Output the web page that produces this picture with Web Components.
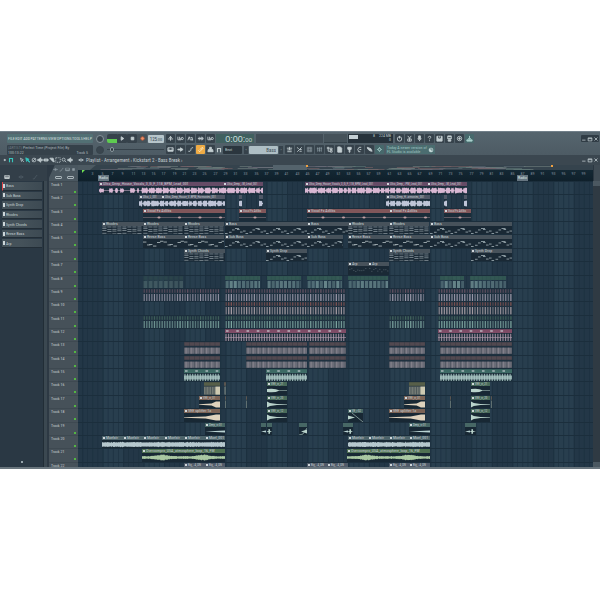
<!DOCTYPE html>
<html lang="en">
<head>
<meta charset="utf-8">
<title>Playlist</title>
<style>
    body {
        margin: 0;
        min-height: 100vh;
        display: flex;
        flex-direction: column;
        justify-content: center;
        background: #fff;
        --ui-font: "Roboto Condensed", Lato, "Liberation Sans", sans-serif;
        font-family: var(--ui-font);
        font-size: 4px;
        line-height: 5px;
        color: #b9c5c9;
    }
</style>
</head>
<body>
<daw-app></daw-app>

<script>
// one bar is 5.12 columns wide, the first bar starts in column 4
const COLS = 515;
const barColumn = bar => 4.5 + (bar - 1) * 5.12;

function random(seed) {
    let s = seed * 7919 + 17;
    return () => {
        s = (s * 1103515245 + 12345) % 2147483648;
        return s / 2147483648;
    };
}

const ICONS = {
    metronome: '<path d="M2 9h12M8 3v10M5 7l3-4 3 4"/>',
    wait: '<path d="M2 4v7h4V4M6 11h3V7"/><circle cx="12" cy="8" r="2.5"/>',
    count: '<path d="M2 12l3-8 3 8M8 6h4M9 11h5M12 6v6"/>',
    steps: '<path d="M2 8h12M5 4v8"/><circle cx="11" cy="8" r="3"/>',
    loop: '<path d="M2 4v7h4V4M6 11h3V7"/><circle cx="12" cy="8" r="2.5"/>',
    piano: '<path fill="currentColor" d="M2 4h12v8H2z"/><path stroke="#36424b" d="M5 4v5M8 4v5M11 4v5"/>',
    arrow: '<path fill="currentColor" d="M2 7h6V4l6 4-6 4V9H2z"/>',
    note: '<path d="M3 12h4c2 0 2-8 4-8h3"/>',
    link: '<path d="M3 10l3 3 3-3M7 8l5-5 2 2-5 5"/>',
    stamp: '<path fill="currentColor" d="M6 3h4v5h3l1 5H2l1-5h3z"/>',
    mixer: '<path d="M2 5h12M3 9h10M3 13h10M8 2v7"/>',
    sliders: '<path d="M3 3l3 4M3 13L13 3M8 12h5M9 8h4"/>',
    grid: '<path d="M3 3h10v10H3zM3 6h10M3 10h10M6 3v10M10 3v10" stroke="#77848b"/>',
    eq: '<path d="M4 3v10M8 3v10M12 3v10M2 6h4M6 10h4M10 5h4" stroke="#84929a"/>',
    tree: '<path d="M3 3h4v3H3zM5 6v6h5M9 5h5v3H9zM10 10h4v4h-4z"/>',
    page: '<path fill="currentColor" d="M4 2h6l3 3v9H4z"/>',
    plug: '<path fill="currentColor" d="M4 3h8v4l-3 3v4H7v-4L4 7z"/>',
    hook: '<path d="M12 3H7L4 8l2 5h4M8 8h4"/>',
    hand: '<path fill="currentColor" d="M3 3l8 3 3 6-5-1-5-4z"/>',
    tempo: '<circle cx="8" cy="8" r="3"/><path d="M8 3v2M8 11v2M3 8h2M11 8h2"/>',
    power: '<circle cx="8" cy="9" r="5"/><path d="M8 2v6"/>',
    plugx: '<path d="M4 2l4 5 4-5M8 7v7M4 9h8v5H4z"/>',
    mic: '<path fill="currentColor" d="M6 2h4v7H6z"/><path d="M4 8c0 4 8 4 8 0M8 11v3"/>',
    help: '<path d="M5 6c0-4 6-4 6-1 0 2-3 2-3 5M8 12v2"/>',
    save: '<path fill="currentColor" d="M2 3h12v11H2z"/><path stroke="#36424b" d="M6 3v4h4V3"/>',
    render: '<path fill="currentColor" d="M4 2h8v7H4zM5 11h6v3H5z"/><path stroke="#36424b" d="M5 6h6"/>',
    chat: '<circle cx="8" cy="8" r="5"/><path d="M5 8h6M8 5v6"/>',
    download: '<path d="M8 2v7M5 7l3 3 3-3"/><path fill="currentColor" d="M2 11h12v3H2z"/>',
    globe: '<circle cx="8" cy="8" r="5" fill="currentColor"/><path stroke="#4b6d70" d="M8 3v5h5"/>',
    magnet: '<path stroke-width="3" d="M4 14V4h8v10"/>',
    pencil: '<path d="M3 3l8 4-2 2 4 4M4 4l3 8 2-3" />',
    brush: '<path fill="currentColor" d="M2 2l9 4-3 2 5 5-2 1-5-5-2 3z"/>',
    erase: '<circle cx="8" cy="8" r="5"/><path d="M4 12l8-8"/>',
    mute: '<path fill="currentColor" d="M2 6h3l5-4v12l-5-4H2zM12 6h2v4h-2z"/>',
    slip: '<path fill="currentColor" d="M1 8l5-4v8zM15 8l-5-4v8z"/><path d="M4 8h8"/>',
    slice: '<path fill="currentColor" d="M2 3h9l3 10-4-1z"/>',
    select: '<path stroke-dasharray="3 2" d="M2 2h12v12H2z"/>',
    zoom: '<circle cx="7" cy="7" r="4"/><path d="M10 10l4 4"/>',
    min: '<path d="M3 11h9"/>',
    max: '<path d="M3 5h10v8H3zM3 7h10"/>',
    close: '<path d="M4 4l8 8M12 4l-8 8"/>',
    curve: '<path d="M2 13h4L12 4h2"/>',
    play: '<path fill="currentColor" d="M5 4l6 4-6 4z"/>',
    caret: '<path fill="currentColor" d="M6 6l4 2-4 2z"/>',
    stop: '<path fill="currentColor" d="M5 5h6v6H5z"/>',
    record: '<circle cx="8" cy="8" r="4" fill="#f0936a" stroke="#b3583c"/>',
    cross: '<path d="M2 8h12M8 3v10M5 6l-3 2 3 2M11 6l3 2-3 2"/>'
};

class DawIcon extends HTMLElement {
    connectedCallback() {
        const root = this.attachShadow({ mode: 'open' });
        root.innerHTML = `
            <style>
                :host { display: block; width: 8px; height: 8px; flex: none; }
                svg { display: block; width: 100%; height: 100%; }
            </style>
            <svg viewBox="0 0 16 16" fill="none" stroke="currentColor" stroke-width="2">${ICONS[this.getAttribute('name')] || ''}</svg>
        `;
    }
}
customElements.define('daw-icon', DawIcon);

class ToolButton extends HTMLElement {
    connectedCallback() {
        const root = this.attachShadow({ mode: 'open' });
        const name = this.getAttribute('icon');
        root.innerHTML = `
            <style>
                :host { display: block; width: 9px; height: 9px; flex: none; color: #c3ced1; }
                :host([active]) { --face: #efab45; color: #fff1d0; }
                :host([teal]) { --face: #47696c; color: #a9d0cd; }
                :host([flat]) { --face: transparent; width: 6px; }
                :host([flat][on]) { color: #37c6bd; }
                button {
                    display: flex;
                    align-items: center;
                    justify-content: center;
                    width: 100%;
                    height: 100%;
                    padding: 0;
                    border: 0;
                    border-radius: 1px;
                    color: inherit;
                    background: var(--face, #36424b);
                }
                daw-icon { width: 7px; height: 7px; }
                :host([flat]) daw-icon { width: 6px; height: 6px; }
            </style>
            <button aria-label="${name}"><daw-icon name="${name}"></daw-icon></button>
        `;
    }
}
customElements.define('tool-button', ToolButton);

const buttons = (names, attrs = '') => names.map(n => `<tool-button icon="${n}" ${attrs}></tool-button>`).join('');

//
// main toolbar: menu, transport, panels
//
class MainToolbar extends HTMLElement {
    constructor() {
        super();
        const menu = ['FILE', 'EDIT', 'ADD', 'PATTERNS', 'VIEW', 'OPTIONS', 'TOOLS', 'HELP'];
        this.attachShadow({ mode: 'open' });
        this.shadowRoot.innerHTML = `
            <style>
                :host {
                    display: flex;
                    gap: 1px;
                    padding: 2px 1px 0 7px;
                    height: 24px;
                    background: linear-gradient(#56656e, #4d5b64);
                    border-top: 1px solid #72808a;
                    box-sizing: border-box;
                    flex: none;
                }
                .left {
                    display: grid;
                    grid-template-columns: 86px 12px 57px 50px;
                    grid-template-rows: 9px 9px;
                    gap: 2px 1px;
                    align-items: center;
                }
                .right { flex: 1; display: grid; grid-template-rows: 9px 9px; gap: 2px; }
                .row { display: flex; gap: 1px; align-items: center; height: 9px; }
                nav, .hint { height: 9px; display: flex; border-radius: 1px; }
                nav { justify-content: space-between; padding: 0 1px; background: #527074; }
                nav button { font: 4px/9px var(--ui-font); padding: 0; border: 0; background: none; color: #d2dfdf; }
                .hint { display: block; height: 10px; background: #35414a; color: #aab5b9; padding: 0 1px; }
                .hint p { margin: 0; display: flex; justify-content: space-between; padding-right: 4px; white-space: nowrap; }
                .hint i { font-style: normal; color: #6c7a81; }
                .knob { width: 6px; height: 6px; border-radius: 50%; background: #3a464f; border: 1px solid #87949b; margin: auto; }
                .knob.dim { border-color: #38444c; }
                .transport { display: flex; align-items: center; height: 9px; }
                .mode { width: 10px; height: 9px; padding: 0; border: 0; background: linear-gradient(#36424b 50%, #5ecb50 50%); border-radius: 2px 0 0 2px; flex: none; }
                .transport tool-button { width: 10px; }
                .transport tool-button[icon="record"] { --face: #45525a; }
                .tempo { flex: 1; min-width: 0; height: 8px; margin-left: 1px; border-radius: 1px; background: #b7c5ca; color: #35454f; font-size: 5px; line-height: 8px; text-align: center; }
                .tempo small { font-size: 3px; }
                input { -webkit-appearance: none; appearance: none; width: 100%; height: 5px; margin: 0; background: linear-gradient(#0000 2px, #36424b 2px 3px, #0000 3px); }
                input::-webkit-slider-thumb { -webkit-appearance: none; width: 4px; height: 5px; border-radius: 2px; background: #2b363e; border: 1px solid #8d9aa0; box-sizing: border-box; }
                .time { width: 38px; height: 9px; background: #40605f; color: #c8dedb; font: 9px/10px "Liberation Sans", sans-serif; text-align: right; padding-right: 2px; box-sizing: border-box; }
                .time small { font-size: 6px; }
                .scope { width: 67px; height: 9px; background: #414d56; }
                .pan { width: 23px; height: 9px; background: #45525a; border-bottom: 1px solid #35424a; box-sizing: border-box; }
                .cpu { width: 45px; height: 9px; background: #26323b; display: grid; grid-template-columns: 9px 1fr 16px; padding: 0 2px 0 1px; box-sizing: border-box; line-height: 4px; text-align: right; }
                .cpu b { background: #c4d0d5; height: 4px; margin-top: 1px; }
                .icons { display: flex; gap: 1px; }
                .shift { margin-left: 1px; }
                .window { margin-left: auto; display: flex; background: #303c45; border-radius: 1px; height: 7px; align-items: center; }
                select { -webkit-appearance: none; appearance: none; border: 0; margin: 0; border-radius: 1px; height: 8px; padding: 0 2px; font: 4px/8px var(--ui-font); background: #2b363e; color: #b9c5c9; }
                .snap { width: 19px; }
                .pattern { width: 29px; background: #aebec4; color: #3c4a53; font-size: 5px; text-align: right; text-align-last: right; }
                .step { width: 4px; height: 8px; padding: 0; border: 0; background: #36424b; color: #b9c5c9; font: 4px/8px var(--ui-font); }
                .news { display: flex; gap: 1px; align-items: center; background: #4b6d70; color: #9fc4c3; padding: 0 1px; height: 9px; width: 49px; line-height: 4px; white-space: nowrap; justify-content: space-between; box-sizing: border-box; }
                .news daw-icon { width: 6px; height: 6px; color: #c9dcdc; }
            </style>
            <div class="left">
                <nav>${menu.map(m => `<button>${m}</button>`).join('')}</nav>
                <span class="knob"></span>
                <div class="transport">
                    <button class="mode" aria-label="pattern or song"></button>
                    ${buttons(['play', 'stop', 'record'])}
                    <span class="tempo">125<small>.000</small></span>
                </div>
                <div class="icons shift">${buttons(['metronome', 'wait', 'count', 'steps', 'loop'])}</div>
                <div class="hint">
                    <p><span><i>(ARTIST)</i> Perfect Time (Project File) By</span></p>
                    <p><span>100:13:22</span><span>Track 5</span></p>
                </div>
                <span class="knob dim"></span>
                <input type="range" aria-label="song position" value="5">
                <div class="icons shift">${buttons(['piano', 'arrow', 'note'])}<tool-button icon="link" active></tool-button>${buttons(['stamp'])}</div>
            </div>
            <div class="right">
                <div class="row">
                    <div class="time">0:00:<small>00</small></div>
                    <div class="scope shift"></div>
                    <div class="pan"></div>
                    <div class="cpu"><b></b><span>8</span><span>224 MB<br>0</span></div>
                    <div class="icons shift">${buttons(['power', 'plugx', 'mic', 'help', 'save', 'render', 'chat'])}<tool-button icon="download" teal></tool-button></div>
                    <div class="window">${buttons(['min', 'max', 'close'], 'flat')}</div>
                </div>
                <div class="row">
                    <tool-button icon="magnet" flat></tool-button>
                    <select class="snap" aria-label="snap"><option>Beat</option></select>
                    <button class="step shift">‹</button>
                    <select class="pattern" aria-label="pattern"><option>Bass</option></select>
                    <button class="step">›</button>
                    <div class="icons shift">${buttons(['mixer', 'sliders', 'grid', 'eq', 'tree', 'page', 'plug', 'hook', 'hand'])}<tool-button icon="tempo" teal></tool-button></div>
                    <div class="news shift"><span>Today A newer version of<br>FL Studio is available</span><daw-icon name="globe"></daw-icon></div>
                </div>
            </div>
        `;
    }
}
customElements.define('main-toolbar', MainToolbar);

//
// title strip of the playlist window
//
class PlaylistBar extends HTMLElement {
    constructor() {
        super();
        this.attachShadow({ mode: 'open' });
        this.shadowRoot.innerHTML = `
            <style>
                :host { display: flex; align-items: center; gap: 5px; height: 10px; padding: 0 1px 0 2px; background: #3b4750; flex: none; }
                .tools { display: flex; align-items: center; }
                h1 { margin: 0; font: 5px/10px var(--ui-font); color: #c3cdd0; white-space: nowrap; }
                .title { display: flex; align-items: center; gap: 2px; }
                .window { margin-left: auto; display: flex; }
            </style>
            <div class="tools">
                <tool-button icon="caret" flat></tool-button><tool-button icon="magnet" flat on></tool-button>
            </div>
            <div class="tools">
                <tool-button icon="pencil" flat></tool-button><tool-button icon="brush" flat on></tool-button>
                ${buttons(['erase', 'mute', 'slip', 'slice', 'select', 'zoom', 'mute'], 'flat')}
            </div>
            <div class="title">
                <tool-button icon="cross" flat></tool-button>
                <h1>Playlist - Arrangement › Kickstart 2 - Bass Break ›</h1>
            </div>
            <div class="window">${buttons(['min', 'max', 'close'], 'flat')}</div>
        `;
    }
}
customElements.define('playlist-bar', PlaylistBar);

//
// picker on the left with the patterns
//
class PatternPicker extends HTMLElement {
    constructor() {
        super();
        const names = ['Bass', 'Sub Bass', 'Synth Drop', 'Rhodes', 'Synth Chords', 'Reese Bass', 'Arp'];
        this.attachShadow({ mode: 'open' });
        this.shadowRoot.innerHTML = `
            <style>
                :host { display: grid; grid-template: 16px 1fr / 43px 4px; width: 47px; background: #2a3844; flex: none; }
                header { grid-column: 1 / 3; display: flex; gap: 8px; align-items: end; padding: 0 4px 1px; background: #333f49; color: #d0d8da; }
                header daw-icon { width: 6px; height: 6px; }
                header daw-icon + daw-icon { color: #4f5c65; }
                .list { display: grid; grid-template-rows: repeat(7, 1fr); gap: 1px; height: 66px; padding: 1px 1px 0 2px; }
                button {
                    display: flex; align-items: center; gap: 1px; padding: 0 0 0 1px; border: 0; border-bottom: 1px solid #222d36;
                    background: linear-gradient(90deg, #45525a 45%, #3d4a53); color: #c3cdd1; font: 4px/7px var(--ui-font);
                }
                button::before { content: ""; width: 2px; height: 4px; background: #cdd6d9; }
                button:first-child { border-left: 1px solid #e4474a; padding-left: 0; }
                .bar { background: #3b4851; border-left: 1px solid #212d36; }
                .side { display: flex; flex-direction: column; justify-content: space-between; }
                .dot { align-self: center; width: 2px; height: 2px; background: #97a5ac; margin-bottom: 4px; }
            </style>
            <header><daw-icon name="piano"></daw-icon><daw-icon name="cross"></daw-icon><daw-icon name="curve"></daw-icon></header>
            <div class="side">
                <div class="list">${names.map(n => `<button>${n}</button>`).join('')}</div>
                <span class="dot"></span>
            </div>
            <div class="bar"></div>
        `;
    }
}
customElements.define('pattern-picker', PatternPicker);

//
// ruler with the bar numbers, the overview strip is above it
//
class TimelineRuler extends HTMLElement {
    constructor() {
        super();
        let numbers = '';
        for (let bar = 3; bar < 100; bar += 2) {
            const c = Math.round(barColumn(bar));
            numbers += `<span style="grid-column: ${c - 4} / ${c + 5}">${bar}</span>`;
        }
        const rnd = random(5);
        const tints = ['#6d6a78', '#7a6265', '#5f7a78', '#71807f', '#5b6a74'];
        let overview = '';
        for (let i = 0; i < 90; i++) {
            const x = 20 + rnd() * 430;
            overview += `<rect x="${x}" y="${1 + Math.floor(rnd() * 4)}" width="${8 + rnd() * 22}" height="1" fill="${tints[i % 5]}" opacity=".6"/>`;
        }
        this.attachShadow({ mode: 'open' });
        this.shadowRoot.innerHTML = `
            <style>
                :host { display: grid; grid-template-rows: 5px 11px; min-width: 0; }
                .overview { background: #35434d; display: block; width: 100%; height: 5px; }
                .numbers { display: grid; grid-template: 5px 6px / repeat(${COLS}, minmax(0, 1fr)); background: linear-gradient(#142834, #0f202b); color: #84939b; text-align: center; }
                .numbers span { grid-row: 1; white-space: nowrap; line-height: 7px; }
                .numbers b { grid-row: 2; font-weight: normal; text-align: center; background: #667580; color: #dfe6e8; line-height: 6px; white-space: nowrap; }
                .numbers i { grid-row: 1; background: #6fe052; clip-path: polygon(0 0, 100% 0, 0 100%); height: 3px; }
            </style>
            <svg class="overview" viewBox="0 0 515 5" preserveAspectRatio="none">
                <path d="M0 0h18l-6 5H0z" fill="#4d5a62"/>${overview}
                <rect x="195" width="34" height="5" fill="#54636c"/>
                <rect x="228" width="2" height="2" fill="#f0a040"/><rect x="473" width="2" height="2" fill="#f0a040"/>
            </svg>
            <div class="numbers">
                <i style="grid-column: 5 / 8"></i>${numbers}
                <b style="grid-column: 21 / 32">Radio</b><b style="grid-column: 440 / 451">Radio</b>
            </div>
        `;
    }
}
customElements.define('timeline-ruler', TimelineRuler);

//
// a clip: title strip and a drawing of its content
//
const wavePath = (w, rnd, level) => {
    let top = '', bottom = '';
    for (let x = 0; x <= w; x += .5) {
        const h = level(x / w, x) * (.65 + .35 * rnd());
        top += `L${x} ${(4.5 - h).toFixed(2)}`;
        bottom = `L${x} ${(4.5 + h).toFixed(2)}` + bottom;
    }
    return `<path d="M0 4.5${top}${bottom}Z" fill="currentColor"/>`;
};

const DRAW = {
    // words with short breaths between them
    vocal(w, rnd) {
        let gate = 1, next = 3;
        return wavePath(w, rnd, (t, x) => {
            if (x > next) {
                gate = gate ? 0 : 1;
                next = x + (gate ? 2 + rnd() * 6 : .5);
            }
            return gate ? 3.1 : .5;
        });
    },
    // sparse words first, full phrase from 42 on
    intro(w, rnd) {
        const words = [[0, 5], [10, 14], [16, 19], [21, 25], [31, 36], [38, 40]];
        return wavePath(w, rnd, (t, x) => x > 42 ? (x % 7 < .9 ? .6 : 3.1) : words.some(p => x > p[0] && x < p[1]) ? 2.6 : .3);
    },
    loop: (w, rnd) => wavePath(w, rnd, () => 2.7),
    air: (w, rnd) => wavePath(w, rnd, (t, x) => 1.5 + Math.pow(Math.sin(x / 13), 6) * 1.6),
    fx(w) {
        let s = `<path d="M0 4.5H${w}" stroke="currentColor" stroke-width=".4"/>`;
        for (let x = 16; x < w; x += 20.5) {
            s += `<ellipse cx="${x}" cy="4.5" rx="1.6" ry=".9" fill="currentColor"/>`;
        }
        return s;
    },
    up: w => `<path d="M0 4.2L${w * .6} 3.6 ${w - 4} 1.6 ${w} 1.6V7.4H${w - 4}L${w * .6} 5.4 0 4.8Z" fill="currentColor"/>`,
    down: w => `<path d="M0 1.4L${w * .15} 3 ${w * .5} 4 ${w} 4.3V4.7L${w * .5} 5 ${w * .15} 6 0 7.6Z" fill="currentColor"/>`,
    swell: w => `<path d="M0 3Q${w * .4} 2 ${w * .6} 4.2L${w} 4.3V4.7L${w * .6} 4.8Q${w * .4} 7 0 6Z" fill="currentColor"/>`,
    thin: w => `<path d="M0 4.5L${w} 3.5V5.5Z" fill="currentColor"/>`,
    hit: w => `<path d="M0 4.3L1.4 4 1.6 2h1L3.2 4 ${w} 4.4 3.2 5 2.6 7h-1L1.4 5 0 4.7Z" fill="currentColor"/>`,
    curve: w => `<path d="M0 8L${w / 2} 7 ${w} 1" fill="none" stroke="currentColor" stroke-width=".6"/><path d="M2 4.5L${w} 2.6V6.4Z" fill="currentColor"/>`,
    decay: w => `<path d="M0 2.6L7 4.5 0 6.4" fill="currentColor"/><path d="M4 0L${w} 9" stroke="currentColor" stroke-width=".6"/>`,
    chords(w) {
        let s = '';
        for (let x = 0; x < w - 1; x += 5) {
            const o = (x * 3 % 4) / 3;
            for (const y of [.5, 2.2, 4, 6.8]) {
                s += `<rect x="${x + .3}" y="${y + (y > 1 ? o : 0)}" width="4.2" height=".9" fill="currentColor" opacity=".8"/>`;
            }
        }
        return s;
    },
    bass(w) {
        const line = [[0, 7], [4, 5.8], [7, 3.5], [10, 2], [12, 3], [15, 5.6], [18, 4.6]];
        let s = '';
        for (let x = 0; x < w; x += 20.5) {
            for (const [a, y] of line) {
                s += `<rect x="${x + a}" y="${y}" width="${a === 10 ? 4 : 2.6}" height=".9" fill="currentColor"/>`;
            }
        }
        return s;
    },
    reese(w) {
        let s = '';
        for (let x = 0; x < w; x += 20.5) {
            for (const [a, y] of [[0, 2.6], [4, 5.5], [6, 5], [10, 6.6], [14, 3], [17, 1.8]]) {
                s += `<rect x="${x + a}" y="${y}" width="3.4" height=".9" fill="currentColor"/>`;
            }
        }
        return s;
    },
    arp(w, rnd) {
        let s = '';
        for (let x = 1; x < w - 1; x += 2) {
            s += `<rect x="${x}" y="${2 + rnd() * 4}" width="1.5" height=".7" fill="currentColor" opacity=".4"/>`;
        }
        return s;
    },
    // one shots, drawn over the whole height of the lane
    hits(w, rnd, o) {
        let s = '';
        for (let x = .6; x < w - .5; x += o.step) {
            const k = .5 + rnd() * .5;
            s += `<rect x="${x}" y="-3.8" width="${o.width}" height="3.6" fill="${o.head}" opacity="${k}"/>
                  <rect x="${x}" y="1" width="${o.width}" height="7.4" fill="currentColor" opacity="${k}"/>`;
        }
        return s;
    },
    blocks(w, rnd, o) {
        let s = `<rect x="0" y="-3.8" width="${w}" height="3.6" fill="${o.head}"/><rect x="0" y="1.6" width="${w}" height="6.2" fill="currentColor" opacity=".55"/>`;
        for (let x = 0; x < w; x += 5.12) {
            s += `<rect x="${x}" y="-3.8" width=".6" height="12" fill="#26333d" opacity=".5"/><rect x="${x + 1.5}" y="1.6" width="1.2" height="6.2" fill="currentColor" opacity=".4"/>`;
        }
        return s;
    },
    beat(w, rnd, o) {
        let s = `<rect x="0" y="-3.8" width="${w}" height="3.8" fill="${o.head}"/>`;
        for (let x = 1; x < w - 2; x += 10.24) {
            s += `<rect x="${x}" y="-2.9" width="2.6" height="1.8" fill="#c8cfd4" opacity=".65"/>`;
        }
        for (let x = .4; x < w - .5; x += 2.56) {
            s += `<rect x="${x}" y=".8" width="1.2" height="7.4" fill="currentColor" opacity=".8"/>`;
        }
        return s + `<path d="M0 4.5H${w}" stroke="currentColor" stroke-width="${o.line || .8}" opacity=".8"/>`;
    },
    grain(w, rnd, o) {
        return `<rect x="0" y="-3.8" width="${w}" height="3.6" fill="${o.head}"/>
            <rect x="0" y=".6" width="${w}" height="8" fill="currentColor" opacity=".45"/>
            <rect x="${w * .72}" y=".6" width="${w * .28}" height="8" fill="currentColor" opacity=".9"/>
            <path d="M2 .6v8M5 .6v8M7.5 .6v8M10 .6v8" stroke="#3d4a50" stroke-width=".7"/>`;
    }
};

class PlaylistClip extends HTMLElement {
    connectedCallback() {
        const { from, to, label, kind, head, ink, shade, opts } = this.clip;
        const w = to - from;
        // long names on short clips are set smaller
        const size = label.length * 2 + 4 > w ? 3 : 4;
        const root = this.attachShadow({ mode: 'open' });
        this.style.gridColumn = `${from - 77} / ${to - 77}`;
        root.innerHTML = `
            <style>
                :host { grid-row: 1; display: grid; grid-template-rows: 4px 1fr; min-width: 0; min-height: 0; overflow: hidden; color: ${ink}; background: ${shade}; }
                .title { display: flex; align-items: center; gap: 1px; background: ${head || 'transparent'}; color: #c6ced3; font-size: ${size}px; line-height: 4px; padding-left: 1px; white-space: nowrap; }
                .title:not(:empty)::before { content: ""; width: 2px; height: 2px; background: #d0d7da; flex: none; }
                svg { display: block; width: 100%; height: 100%; overflow: visible; min-height: 0; }
            </style>
            <div class="title">${label && `<span>${label}</span>`}</div>
            <svg viewBox="0 0 ${w} 9" preserveAspectRatio="none">${DRAW[kind](w, random(from), { head: opts.tint, ...opts })}</svg>
        `;
    }
}
customElements.define('playlist-clip', PlaylistClip);

class PlaylistTrack extends HTMLElement {
    connectedCallback() {
        const root = this.attachShadow({ mode: 'open' });
        root.innerHTML = `
            <style>
                :host { display: grid; grid-template-columns: 29px 1fr; min-height: 0; box-sizing: border-box; }
                .head { background: #465159; border-top: 1px solid #3e4951; color: #c4ccd0; font-size: 4px; line-height: 5px; padding-left: 2px; display: flex; justify-content: space-between; white-space: nowrap; }
                .led { align-self: end; width: 2px; height: 2px; padding: 0; border: 0; border-radius: 1px; background: #58d83c; margin: 0 2px 2px 0; }
                .lane { display: grid; grid-template: minmax(0, 1fr) / repeat(${COLS}, minmax(0, 1fr)); min-width: 0; border-top: 1px solid #1b2e3c; }
            </style>
            <div class="head"><span>${this.getAttribute('name')}</span><button class="led" aria-label="mute"></button></div>
            <div class="lane"></div>
        `;
        const lane = root.querySelector('.lane');
        this.clips.forEach(clip => {
            const el = document.createElement('playlist-clip');
            el.clip = clip;
            lane.appendChild(el);
        });
    }
}
customElements.define('playlist-track', PlaylistTrack);

// clip styles: [drawing, title colour, ink, background, options]
const STYLES = {
    intro: ['intro', '#654b66', '#d9b8d3', '#1d2f3d'],
    lead: ['vocal', '#654b66', '#d9b8d3', '#1d2f3d'],
    harmony: ['vocal', '#4f5766', '#bfc5d8', '#1d2f3d'],
    adlib: ['fx', '#80565a', '#c0a0a4', '#1b2c39'],
    rhodes: ['chords', '#47525b', '#929fa6', '#1a2935'],
    bass: ['bass', '#47525b', '#94a2a9', '#1a2935'],
    reese: ['reese', '#47525b', '#a3afb4', '#1a2935'],
    arp: ['arp', '#47525b', '#94a2a9', '#1a2935'],
    shakerDim: ['hits', null, '#4a636a', '#2c454b55', { tint: '#2d474c', step: 5.12, width: 3.6 }],
    shaker: ['hits', null, '#66858a', 'linear-gradient(#2f5250 4px, #0000 4px)', { tint: '#355a55', step: 4.1, width: 3 }],
    hatA: ['hits', null, '#a7a3b4', '#1f3140', { tint: '#6e5767', step: 2.56, width: 1.2 }],
    hatB: ['hits', null, '#b3a7ad', '#1f3140', { tint: '#8b5753', step: 2.56, width: 1.2 }],
    hatC: ['hits', null, '#7fa9a3', '#1f3140', { tint: '#45695f', step: 2.56, width: 1.3 }],
    kick: ['beat', null, '#b09aac', '#1d2d3a', { tint: '#7e4c66' }],
    snare: ['blocks', null, '#a89da4', '#1f3140', { tint: '#524950' }],
    clap: ['beat', null, '#abc8c5', '#1c303b', { tint: '#3d6a65', line: 4 }],
    grain: ['grain', null, '#d8d2b8', '#22323c', { tint: '#575f49' }],
    sliver: ['grain', null, '#8c9a96', '#22323c', { tint: '#5a5550' }],
    swell: ['swell', '#496b5b', '#b9d3cb', '#182834'],
    fall: ['down', '#496b5b', '#b9d3cb', '#182834'],
    rise: ['up', '#7b6356', '#ded2bd', '#182834'],
    thin: ['thin', '#476765', '#b9d3d3', '#182834'],
    hit: ['hit', '#476765', '#b9d3cb', '#182834'],
    curve: ['curve', '#476765', '#b9d3cb', '#182834'],
    decay: ['decay', '#476765', '#b9d3cb', '#182834'],
    pad: ['loop', '#4c636a', '#b6c8ce', '#182834'],
    air: ['air', '#4f7152', '#a9c7a2', '#182834'],
    big: ['loop', '#505b69', '#b6c8ce', '#182834']
};

const LEAD = 'Ultra_Deep_House_Vocals_3_G_F_118_BPM_Lead_001';
const LEAD_SHORT = 'Ultra_Deep_..M_Lead_001';
const LOOP = 'Overcompro_USA_atmosphere_loop_16_FM';
const TRACKS = [
    [['intro', 99, 223, LEAD], ['lead', 223, 263, LEAD_SHORT], ['lead', 305, 386, LEAD], ['lead', 386, 427, 'Ultra_Deep_..PM_Lead_001'], ['lead', 427, 467, LEAD_SHORT]],
    [['harmony', 139, 161, 'Ultra_L_001'], ['harmony', 161, 225, 'Ultra_Deep_House_V..BPM_Harmonies_001'], ['harmony', 239, 242], ['harmony', 259, 263],
        ['harmony', 386, 430, 'Ultra_Deep_H..armonies_001'], ['harmony', 444, 447], ['harmony', 464, 467]],
    [['adlib', 143, 225, 'Vocal Fx Adlibs'], ['adlib', 239, 266, 'Vocal Fx Adlibs'], ['adlib', 307, 389, 'Vocal Fx Adlibs'], ['adlib', 389, 430, 'Vocal Fx Adlibs'], ['adlib', 444, 471, 'Vocal Fx Adlibs']],
    [['rhodes', 102, 143, 'Rhodes'], ['rhodes', 143, 184, 'Rhodes'], ['rhodes', 184, 224, 'Rhodes'], ['bass', 225, 307, 'Bass'], ['bass', 307, 348, 'Bass'],
        ['rhodes', 348, 389, 'Rhodes'], ['rhodes', 389, 429, 'Rhodes'], ['bass', 430, 512, 'Bass']],
    [['reese', 143, 184, 'Reese Bass'], ['reese', 184, 224, 'Reese Bass'], ['bass', 225, 307, 'Sub Bass'], ['bass', 307, 343, 'Sub Bass'],
        ['reese', 348, 389, 'Reese Bass'], ['reese', 389, 430, 'Reese Bass'], ['bass', 430, 512, 'Sub Bass']],
    [['rhodes', 184, 225, 'Synth Chords'], ['bass', 266, 307, 'Synth Drop'], ['rhodes', 389, 430, 'Synth Chords'], ['bass', 471, 512, 'Synth Drop']],
    [['arp', 348, 368, 'Arp'], ['arp', 368, 389, 'Arp']],
    [['shakerDim', 143, 183], ['shaker', 225, 260], ['shaker', 267, 301], ['shaker', 307, 342], ['shaker', 348, 388], ['shaker', 440, 464], ['shaker', 470, 506]],
    [['hatA', 143, 220], ['hatA', 225, 346], ['hatA', 389, 425], ['hatA', 438, 512]],
    [['hatB', 225, 346], ['hatB', 438, 512]],
    [['hatC', 143, 220], ['hatC', 225, 346], ['hatC', 389, 425], ['hatC', 438, 512]],
    [['kick', 225, 346], ['kick', 438, 512]],
    [['snare', 184, 220], ['snare', 246, 307], ['snare', 309, 346], ['snare', 389, 425], ['snare', 440, 512]],
    [['snare', 184, 220], ['snare', 246, 307], ['snare', 309, 346], ['snare', 389, 425], ['snare', 440, 512]],
    [['clap', 184, 220], ['clap', 266, 307], ['clap', 440, 512]],
    [['grain', 204, 220], ['sliver', 224, 226], ['swell', 267, 287, 'VEE_vr_21'], ['grain', 409, 425], ['swell', 471, 490, 'VEE_vr_21']],
    [['rise', 199, 220, 'VEE_vr_01'], ['sliver', 225, 226], ['sliver', 246, 247], ['fall', 267, 287, 'VEE_vr_20'], ['rise', 404, 425, 'VEE_vr_01'],
        ['sliver', 450, 451], ['fall', 471, 490, 'VEE_vr_20'], ['sliver', 491, 492]],
    [['rise', 184, 220, 'VEE uplifter 1a'], ['fall', 267, 287, 'VEE_vr_12'], ['decay', 348, 363, 'VE_r 02'], ['rise', 389, 425, 'VEE uplifter 1a'], ['fall', 471, 490, 'VEE_vr_12']],
    [['thin', 205, 225, 'Deep_vr 01'], ['thin', 261, 266], ['hit', 267, 272], ['curve', 299, 307], ['thin', 343, 348], ['hit', 348, 353],
        ['thin', 409, 430, 'Deep_vr 01'], ['thin', 465, 470], ['hit', 470, 476]],
    [['pad', 102, 123, 'Maelstr'], ['pad', 123, 143, 'Maelstr'], ['pad', 143, 164, 'Maelstr'], ['pad', 164, 184, 'Maelstr'], ['pad', 184, 205, 'Maelstr'], ['pad', 205, 225, 'Mael_001'],
        ['pad', 348, 368, 'Maelstr'], ['pad', 368, 389, 'Maelstr'], ['pad', 389, 409, 'Maelstr'], ['pad', 409, 430, 'Mael_001']],
    [['air', 142, 225, LOOP], ['air', 347, 430, LOOP]],
    [['big', 184, 205, 'Big_..4_DN'], ['big', 205, 225, 'Big_..4_DN'], ['big', 307, 327, 'Big_..4_DN'], ['big', 327, 348, 'Big_..4_DN'], ['big', 389, 409, 'Big_..4_DN'], ['big', 409, 430, 'Big_..4_DN']]
];

//
// the playlist: ruler on top, tracks below
//
class PlaylistView extends HTMLElement {
    constructor() {
        super();
        let grid = '';
        for (let bar = 1; bar < 101; bar++) {
            const x = barColumn(bar);
            if ((bar - 1) % 8 >= 4) {
                grid += `<rect x="${x}" width="5.2" height="1" fill="#283e4e"/>`;
            }
            grid += `<rect x="${x - .3}" width="${(bar - 1) % 4 ? .6 : 1}" height="1" fill="#1a2e3c" opacity=".75"/>`;
        }
        this.attachShadow({ mode: 'open' });
        this.shadowRoot.innerHTML = `
            <style>
                :host { display: grid; grid-template: 16px 1fr / 29px minmax(0, 1fr) 7px; flex: 1; min-width: 0; padding-left: 2px; background: #2d3944; }
                .corner { background: #4a5760; color: #8f9ca3; display: flex; flex-wrap: wrap; align-items: center; justify-content: space-around; clip-path: polygon(20% 0, 100% 0, 100% 100%, 0 100%, 0 80%); padding: 0 2px 0 4px; }
                .corner daw-icon { width: 5px; height: 5px; }
                .corner i { width: 5px; height: 1px; border: 1px solid #aab5ba; border-radius: 1px; }
                .tracks { grid-column: 1 / 3; position: relative; overflow: hidden; height: 286px; background: linear-gradient(90deg, #465159 29px, #233747 29px); }
                .grid { position: absolute; left: 29px; top: 0; width: calc(100% - 29px); height: 100%; }
                .rows { position: relative; display: grid; grid-template-rows: repeat(22, minmax(0, 1fr)); height: 294px; }
                .cap { background: #3f4b54; border-left: 1px solid #2b3741; }
                .scroll { background: #2f3a43; display: flex; flex-direction: column; justify-content: space-between; }
                .scroll b { height: 5px; background: #4b5861; }
            </style>
            <div class="corner"><daw-icon name="cross"></daw-icon><daw-icon name="curve"></daw-icon><daw-icon name="piano"></daw-icon><daw-icon name="stop"></daw-icon><i></i><i></i></div>
            <timeline-ruler></timeline-ruler>
            <div class="cap"></div>
            <div class="tracks">
                <svg class="grid" viewBox="0 0 515 1" preserveAspectRatio="none">${grid}</svg>
                <div class="rows"></div>
            </div>
            <div class="scroll"><b></b><b></b></div>
        `;
        const rows = this.shadowRoot.querySelector('.rows');
        TRACKS.forEach((list, i) => {
            const track = document.createElement('playlist-track');
            track.setAttribute('name', `Track ${i + 1}`);
            track.clips = list.map(([style, from, to, label = '']) => {
                const [kind, head, ink, shade, opts = {}] = STYLES[style];
                return { from, to, label, kind, head, ink, shade, opts };
            });
            rows.appendChild(track);
        });
    }
}
customElements.define('playlist-view', PlaylistView);

class DawApp extends HTMLElement {
    constructor() {
        super();
        this.attachShadow({ mode: 'open' });
        this.shadowRoot.innerHTML = `
            <style>
                :host { display: flex; flex-direction: column; background: #2d3944; border-bottom: 2px solid #69757d; }
                .main { display: flex; }
            </style>
            <main-toolbar></main-toolbar>
            <playlist-bar></playlist-bar>
            <div class="main">
                <pattern-picker></pattern-picker>
                <playlist-view></playlist-view>
            </div>
        `;
    }
}
customElements.define('daw-app', DawApp);
</script>
</body>
</html>
